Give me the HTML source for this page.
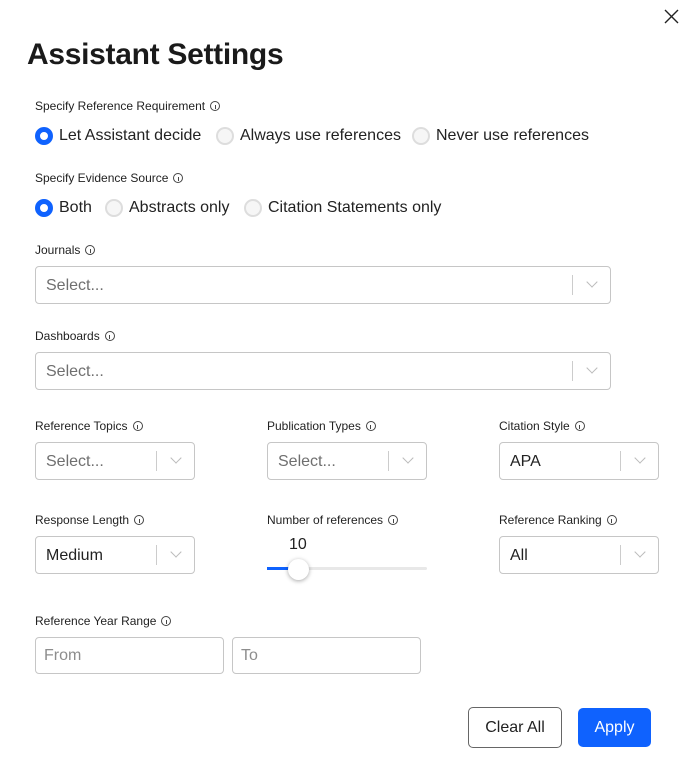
<!DOCTYPE html>
<html><head><style>
*{box-sizing:border-box;margin:0;padding:0}
body{width:693px;height:767px;background:#fff;font-family:"Liberation Sans",sans-serif;color:#161616;position:relative;overflow:hidden}
.a{position:absolute}
.t{font-size:30px;font-weight:bold;left:27px;top:38px;letter-spacing:-0.3px;color:#1a1a1a}
.lb{font-size:12px;color:#222;white-space:nowrap}
.lb i{display:inline-block;width:10px;height:10px;border:1px solid #444;border-radius:50%;margin-left:5px;vertical-align:-1px;position:relative;font-style:normal}
.lb i:after{content:"";position:absolute;left:3.5px;top:2.5px;width:1px;height:4px;background:#444}
.r{width:18px;height:18px;border-radius:50%;border:2px solid #ddd;background:#f6f6f6}
.r.on{border:5px solid #0f62fe;background:#fff}
.rt{font-size:16px;color:#222;white-space:nowrap}
.sel{border:1px solid #c6c6c6;border-radius:4px;height:38px;background:#fff}
.sel span{position:absolute;left:10px;top:10px;font-size:16px;color:#6f6f6f}
.sel span.v{color:#222}
.sel b{position:absolute;right:37px;top:8px;width:1px;height:20px;background:#ccc}
.sel em{position:absolute;right:14px;top:11px;width:8px;height:8px;border-right:1.5px solid #bbb;border-bottom:1.5px solid #bbb;transform:rotate(45deg)}
.in{border:1px solid #c6c6c6;border-radius:4px;height:37px}
.in span{position:absolute;left:8px;top:9px;font-size:16px;color:#8d8d8d}
</style></head><body>
<svg class="a" style="left:664px;top:9px" width="15" height="15" viewBox="0 0 15 15"><path d="M1 1L14 14M14 1L1 14" stroke="#222" stroke-width="1.4"/></svg>
<div class="a t">Assistant Settings</div>

<div class="a lb" style="left:35px;top:99px">Specify Reference Requirement<i></i></div>
<div class="a r on" style="left:35px;top:127px"></div><div class="a rt" style="left:59px;top:127px">Let Assistant decide</div>
<div class="a r" style="left:216px;top:127px"></div><div class="a rt" style="left:240px;top:127px">Always use references</div>
<div class="a r" style="left:412px;top:127px"></div><div class="a rt" style="left:436px;top:127px">Never use references</div>

<div class="a lb" style="left:35px;top:171px">Specify Evidence Source<i></i></div>
<div class="a r on" style="left:35px;top:199px"></div><div class="a rt" style="left:59px;top:199px">Both</div>
<div class="a r" style="left:105px;top:199px"></div><div class="a rt" style="left:129px;top:199px">Abstracts only</div>
<div class="a r" style="left:244px;top:199px"></div><div class="a rt" style="left:268px;top:199px">Citation Statements only</div>

<div class="a lb" style="left:35px;top:243px">Journals<i></i></div>
<div class="a sel" style="left:35px;top:266px;width:576px"><span>Select...</span><b></b><em></em></div>
<div class="a lb" style="left:35px;top:329px">Dashboards<i></i></div>
<div class="a sel" style="left:35px;top:352px;width:576px"><span>Select...</span><b></b><em></em></div>

<div class="a lb" style="left:35px;top:419px">Reference Topics<i></i></div>
<div class="a sel" style="left:35px;top:442px;width:160px"><span>Select...</span><b></b><em></em></div>
<div class="a lb" style="left:267px;top:419px">Publication Types<i></i></div>
<div class="a sel" style="left:267px;top:442px;width:160px"><span>Select...</span><b></b><em></em></div>
<div class="a lb" style="left:499px;top:419px">Citation Style<i></i></div>
<div class="a sel" style="left:499px;top:442px;width:160px"><span class="v">APA</span><b></b><em></em></div>

<div class="a lb" style="left:35px;top:513px">Response Length<i></i></div>
<div class="a sel" style="left:35px;top:536px;width:160px"><span class="v">Medium</span><b></b><em></em></div>
<div class="a lb" style="left:267px;top:513px">Number of references<i></i></div>
<div class="a" style="left:289px;top:536px;font-size:16px;color:#222">10</div>
<div class="a" style="left:267px;top:567px;width:160px;height:3px;background:#e8e8e8;border-radius:2px"></div>
<div class="a" style="left:267px;top:567px;width:31px;height:3px;background:#0f62fe"></div>
<div class="a" style="left:288px;top:559px;width:21px;height:21px;border-radius:50%;background:#fff;box-shadow:0 1px 4px rgba(0,0,0,.35)"></div>
<div class="a lb" style="left:499px;top:513px">Reference Ranking<i></i></div>
<div class="a sel" style="left:499px;top:536px;width:160px"><span class="v">All</span><b></b><em></em></div>

<div class="a lb" style="left:35px;top:614px">Reference Year Range<i></i></div>
<div class="a in" style="left:35px;top:637px;width:189px"><span>From</span></div>
<div class="a in" style="left:232px;top:637px;width:189px"><span>To</span></div>

<div class="a" style="left:468px;top:707px;width:94px;height:41px;border:1px solid #666;border-radius:5px;font-size:16px;text-align:center;line-height:39px;color:#222">Clear All</div>
<div class="a" style="left:578px;top:708px;width:73px;height:39px;background:#0f62fe;border-radius:5px;font-size:16px;text-align:center;line-height:39px;color:#fff">Apply</div>
</body></html>
